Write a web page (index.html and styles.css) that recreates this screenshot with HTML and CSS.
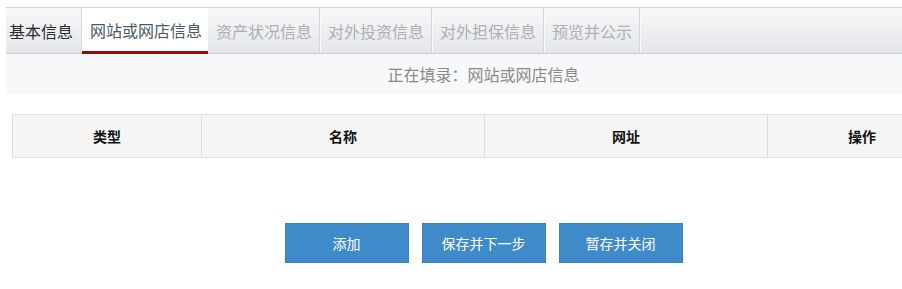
FILE: index.html
```html
<!DOCTYPE html>
<html lang="zh-CN">
<head>
<meta charset="utf-8">
<title>网站或网店信息</title>
<link rel="stylesheet" href="styles.css">
</head>
<body>
<div class="page">
  <div class="tabs">
    <div class="tab tab-first">基本信息</div>
    <div class="tab tab-active">网站或网店信息</div>
    <div class="tab tab-off">资产状况信息</div>
    <div class="tab tab-off">对外投资信息</div>
    <div class="tab tab-off">对外担保信息</div>
    <div class="tab tab-off">预览并公示</div>
  </div>
  <div class="status">正在填录：网站或网店信息</div>
  <table class="grid">
    <thead>
      <tr>
        <th class="c-type">类型</th>
        <th class="c-name">名称</th>
        <th class="c-url">网址</th>
        <th class="c-op">操作</th>
      </tr>
    </thead>
  </table>
  <div class="actions">
    <button class="btn btn-add">添加</button>
    <button class="btn">保存并下一步</button>
    <button class="btn">暂存并关闭</button>
  </div>
</div>
</body>
</html>
```
FILE: styles.css
```css
html, body {
  margin: 0;
  padding: 0;
  background: #fff;
  overflow: hidden;
}
body {
  font-family: "Noto Sans CJK SC", "Liberation Sans", sans-serif;
  color: #333;
}
.page {
  width: 955px;
  padding: 7px 0 0 6px;
}
.tabs {
  display: flex;
  height: 45px;
  border-top: 1px solid #cfd3d8;
  border-bottom: 1px solid #c9ced4;
  background: linear-gradient(#f7f8f9, #e3e6e9);
}
.tab {
  display: flex;
  align-items: center;
  font-size: 16px;
  padding: 0 7px 0 8px;
  border-right: 1px solid #d3d7db;
  box-shadow: 1px 0 0 #f8f9fa;
  color: #aeb0b3;
  white-space: nowrap;
  line-height: 1;
}
.tab-first {
  padding: 0 8px 0 3px;
  color: #2c2c2c;
  border-right-color: #d8dce0;
}
.tab-active {
  padding: 0 6px 0 8px;
  background: #fff;
  color: #4b5966;
  border-right: none;
  box-shadow: none;
  border-bottom: 3px solid #9a0b0b;
  margin-bottom: -1px;
  height: 43px;
}
.status {
  height: 40px;
  background: #f7f8fa;
  display: flex;
  align-items: center;
  justify-content: center;
  font-size: 16px;
  color: #8a8a8a;
}
.grid {
  margin: 20px 0 0 6px;
  width: 945px;
  border-collapse: collapse;
  table-layout: fixed;
}
.grid th {
  height: 42px;
  background: #f5f5f5;
  border: 1px solid #dedede;
  font-size: 14px;
  font-weight: bold;
  color: #111;
  padding: 0;
}
.c-type { width: 188px; }
.c-name { width: 282px; }
.c-url { width: 282px; }
.actions {
  display: flex;
  justify-content: center;
  gap: 13px;
  margin-top: 65px;
}
.btn {
  width: 124px;
  height: 40px;
  background: #3f8ac9;
  border: 1px solid #3a80c0;
  color: #fff;
  font-family: inherit;
  font-size: 14px;
  padding: 0;
  cursor: pointer;
}
```
